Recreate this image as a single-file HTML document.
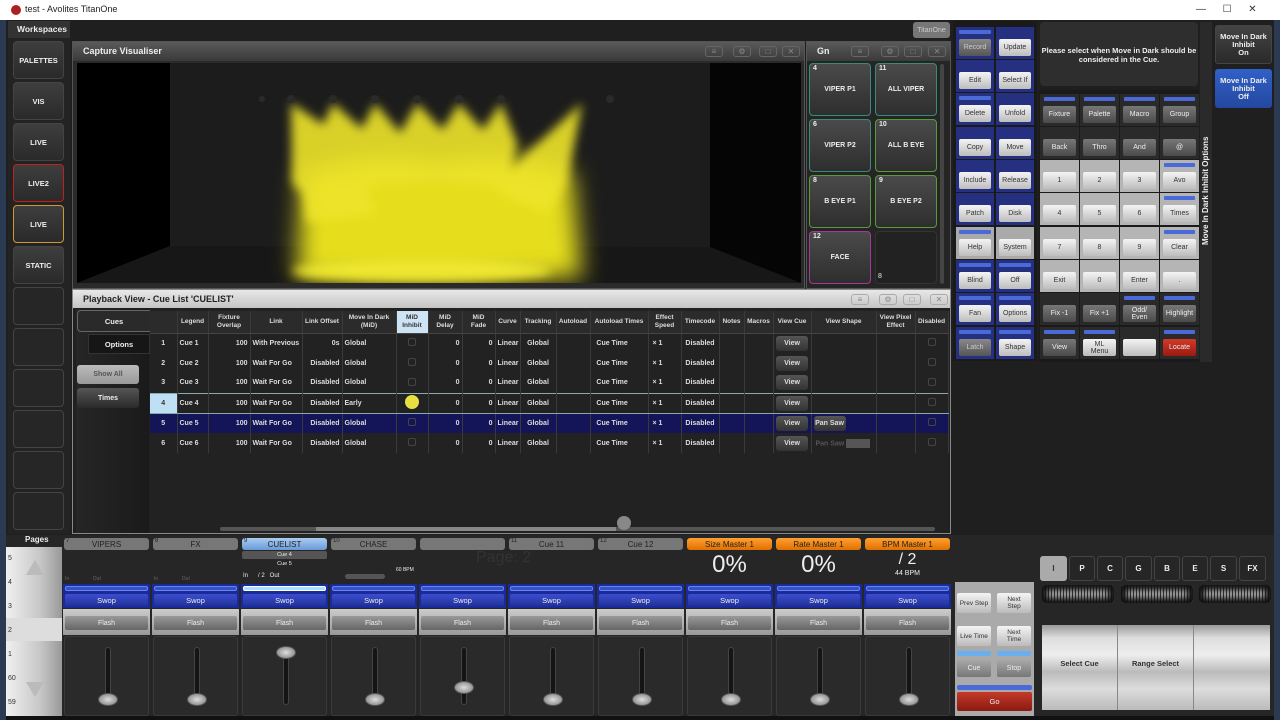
<!DOCTYPE html>
<html style="overflow:hidden"><head><meta charset="utf-8"><style>
*{box-sizing:border-box;margin:0;padding:0}
html,body{width:1280px;height:720px;overflow:hidden}
body{background:#1f1f1f;font-family:"Liberation Sans",sans-serif;color:#eee;position:relative;font-size:8px}
.a{position:absolute}
.c{display:flex;align-items:center;justify-content:center;text-align:center}
.ws{position:absolute;left:13px;width:51px;height:38px;border:1px solid #444;border-radius:4px;background:linear-gradient(#3e3e3e,#2a2a2a);font-weight:bold;font-size:7.5px;color:#eee}
.ws.e{background:#262626}
.win{position:absolute;background:#252525;border:1px solid #555}
.tb{position:absolute;left:0;right:0;top:0;height:19px;background:linear-gradient(#5a5a5a,#3a3a3a);font-weight:bold;font-size:9px;padding:4px 10px}
.ico{position:absolute;top:4px;width:18px;height:11px;border:1px solid #666;border-radius:3px;color:#888;font-size:8px;line-height:9px;text-align:center}
.gb{position:absolute;width:62px;height:53px;border:1px solid;border-radius:4px;background:linear-gradient(#4a4a4a,#2e2e2e);font-size:7px;font-weight:bold}
.gb span{position:absolute;left:3px;top:1px;font-size:7px}
table{border-collapse:collapse;table-layout:fixed;position:absolute;left:150px;top:311px;width:797px}
td,th{border-right:1px solid #3a3a3a;height:20px;font-size:7px;font-weight:bold;color:#ddd;padding:0 2px;white-space:nowrap;overflow:hidden}
th{height:22px;background:#2b2b2b;text-align:center;line-height:8px;border-bottom:1px solid #444;white-space:normal;font-size:6.5px}
td.r{text-align:right}td.m{text-align:center}
tr.s td{background:#141458}
tr.h td{border-top:1px solid #8aa;border-bottom:1px solid #8aa}
.cb{display:inline-block;width:8px;height:8px;border:1px solid #444;border-radius:2px}
.vw{display:inline-block;width:32px;height:15px;line-height:15px;background:linear-gradient(#555,#333);border-radius:3px;text-align:center}
.cmd{position:absolute;width:38px;height:32px;background:#263080}
.cmd.g{background:#aaa}
.cmd .bar{position:absolute;left:3px;right:3px;top:3px;height:4px;background:#4a6ad8;border-radius:1px}
.cmd .bt{position:absolute;left:3px;right:3px;top:12px;height:17px;background:linear-gradient(#f4f4f4,#bdbdbd);color:#333;border-radius:2px;font-size:7px}
.kp{position:absolute;width:39px;height:32px;background:#2a2a2a}
.kp.l{background:#b5b5b5}
.kp .bar{position:absolute;left:4px;right:4px;top:3px;height:4px;background:#4a6ad8;border-radius:1px}
.kp .bt{position:absolute;left:3px;right:3px;top:12px;height:17px;border-radius:2px;font-size:7px;line-height:7px}
.bd{background:linear-gradient(#777,#4a4a4a);color:#eee}
.bl{background:linear-gradient(#f4f4f4,#bdbdbd);color:#333}
.fc{position:absolute;top:537px;width:87px;height:179px}
.tab{position:absolute;top:1px;left:1px;right:1px;height:12px;background:#777;border-radius:3px;color:#222;font-size:8px}
.tab i{position:absolute;left:2px;top:0;font-style:normal;font-size:6px}
.sw{position:absolute;top:47px;left:0;right:0;height:24px;background:#1a2a9a}
.sw .bar{position:absolute;left:2px;right:2px;top:2px;height:5px;background:#3052d0;border:1px solid #6a86e0;border-radius:2px}
.sw .bt{position:absolute;left:2px;right:2px;top:10px;height:12px;background:linear-gradient(#3c4ed0,#22329a);border-radius:2px;font-size:7.5px}
.fl{position:absolute;top:72px;left:0;right:0;height:26px;background:linear-gradient(#ccc,#999)}
.fl .bt{position:absolute;left:2px;right:2px;top:7px;height:14px;background:linear-gradient(#999,#666);border-radius:2px;font-size:7px}
.fd{position:absolute;top:99px;left:1px;right:1px;bottom:0;border:1px solid #3a3a3a;border-radius:3px;background:#2a2a2a}
.trk{position:absolute;left:40px;top:10px;width:6px;height:58px;background:#151515;border-radius:3px;border:1px solid #444}
.knb{position:absolute;left:33px;width:20px;height:13px;border-radius:50%;background:radial-gradient(#ddd,#777);border:1px solid #555}
</style></head><body>
<div class="a" style="left:0;top:0;width:1280px;height:20px;background:#fff;color:#222;font-size:9px;padding:4px 0 0 25px">test - Avolites TitanOne</div>
<div class="a" style="left:11px;top:5px;width:10px;height:10px;border-radius:50%;background:#a22"></div>
<div class="a" style="left:1196px;top:4px;color:#333;font-size:10px">&#8212;&nbsp;&nbsp;&nbsp;&nbsp;&nbsp;&nbsp;&#9744;&nbsp;&nbsp;&nbsp;&nbsp;&nbsp;&nbsp;&#10005;</div>
<div class="a" style="left:0;top:20px;width:6px;height:700px;background:#2a3a52"></div>
<div class="a" style="left:1274px;top:20px;width:6px;height:700px;background:#2a3a52"></div>
<div class="a" style="left:8px;top:21px;width:62px;height:17px;background:#333;font-size:8.5px;font-weight:bold;padding:3px 0 0 9px">Workspaces</div>
<div class="a" style="left:8px;top:38px;width:62px;height:496px;background:#232323"></div>
<div class="ws c" style="top:41px">PALETTES</div>
<div class="ws c" style="top:82px">VIS</div>
<div class="ws c" style="top:123px">LIVE</div>
<div class="ws c" style="top:164px;border-color:#b22">LIVE2</div>
<div class="ws c" style="top:205px;border-color:#c93">LIVE</div>
<div class="ws c" style="top:246px">STATIC</div>
<div class="ws e" style="top:287px"></div><div class="ws e" style="top:328px"></div><div class="ws e" style="top:369px"></div><div class="ws e" style="top:410px"></div><div class="ws e" style="top:451px"></div><div class="ws e" style="top:492px"></div>
<div class="win" style="left:72px;top:41px;width:733px;height:248px;background:#2a2a2a">
<div class="tb">Capture Visualiser</div>
<div class="ico" style="left:632px">&#8801;</div><div class="ico" style="left:660px">&#9881;</div><div class="ico" style="left:686px">&#9633;</div><div class="ico" style="left:709px">&#10005;</div>
</div>
<svg class="a" style="left:77px;top:63px" width="724" height="220">
<defs><filter id="bl" x="-30%" y="-30%" width="160%" height="160%"><feGaussianBlur stdDeviation="5"/></filter><filter id="b2" x="-30%" y="-30%" width="160%" height="160%"><feGaussianBlur stdDeviation="12"/></filter></defs>
<rect width="724" height="220" fill="#1a1a1a"/>
<rect x="93" y="0" width="540" height="184" fill="#1c1c1c"/>
<polygon points="0,0 93,0 93,183 0,220" fill="#000"/>
<polygon points="633,0 724,0 724,220 633,184" fill="#050505"/>
<polygon points="93,183 633,184 724,220 0,220" fill="#171717"/>
<g filter="url(#b2)" fill="#e6de1c">
<path d="M225 110 Q300 85 360 100 Q430 85 495 110 L505 215 L220 215 Z"/>
</g>
<g filter="url(#bl)" fill="#eee42a" opacity="0.9">
<polygon points="214,40 250,70 235,140 215,120"/>
<polygon points="214,40 262,72 300,150 230,160"/>
<polygon points="256,40 292,72 300,125 255,120 240,75"/>
<polygon points="298,40 325,72 335,120 285,120 280,75"/>
<polygon points="340,40 370,72 375,120 320,120 322,72"/>
<polygon points="382,40 410,72 410,120 360,120 360,75"/>
<polygon points="424,40 440,80 430,125 390,120 400,75"/>
<polygon points="505,40 490,120 470,150 420,130 450,90"/>
<ellipse cx="345" cy="208" rx="130" ry="12" fill="#f6ee30"/>
</g>
<g fill="#2a2a2a"><circle cx="185" cy="36" r="3"/><circle cx="214" cy="36" r="4"/><circle cx="256" cy="36" r="4"/><circle cx="298" cy="36" r="4"/><circle cx="340" cy="36" r="4"/><circle cx="382" cy="36" r="4"/><circle cx="424" cy="36" r="4"/><circle cx="533" cy="36" r="4"/></g>
</svg>
<div class="a c" style="left:913px;top:22px;width:37px;height:16px;background:#777;border-radius:3px;color:#ccc;font-size:7px">TitanOne</div>
<div class="win" style="left:806px;top:41px;width:145px;height:248px">
<div class="tb" style="padding-left:10px">Gn</div>
<div class="ico" style="left:44px">&#8801;</div><div class="ico" style="left:74px">&#9881;</div><div class="ico" style="left:97px">&#9633;</div><div class="ico" style="left:121px">&#10005;</div>
</div>
<div class="gb c" style="left:809px;top:63px;border-color:#3a8a7a"><span>4</span>VIPER P1</div>
<div class="gb c" style="left:875px;top:63px;border-color:#3a8a7a"><span>11</span>ALL VIPER</div>
<div class="gb c" style="left:809px;top:119px;border-color:#3a8a7a"><span>6</span>VIPER P2</div>
<div class="gb c" style="left:875px;top:119px;border-color:#5a9a3a"><span>10</span>ALL B EYE</div>
<div class="gb c" style="left:809px;top:175px;border-color:#5a9a3a"><span>8</span>B EYE P1</div>
<div class="gb c" style="left:875px;top:175px;border-color:#5a9a3a"><span>9</span>B EYE P2</div>
<div class="gb c" style="left:809px;top:231px;border-color:#a3399a"><span>12</span>FACE</div>
<div class="a" style="left:875px;top:231px;width:62px;height:53px;border:1px solid #333;border-radius:4px;background:#222;font-size:7px;padding:41px 0 0 2px">8</div>
<div class="a" style="left:940px;top:64px;width:4px;height:220px;background:#444;border-radius:2px"></div>
<div class="win" style="left:72px;top:289px;width:879px;height:245px;background:#202020;border-color:#888">
<div class="tb" style="background:linear-gradient(#e8e8e8,#c4c4c4);color:#222;height:18px;padding-top:4px">Playback View - Cue List 'CUELIST'</div>
<div class="ico" style="left:778px;border-color:#aaa">&#8801;</div><div class="ico" style="left:806px;border-color:#aaa">&#9881;</div><div class="ico" style="left:830px;border-color:#aaa">&#9633;</div><div class="ico" style="left:857px;border-color:#aaa">&#10005;</div>
</div>
<div class="a" style="left:76px;top:309px;width:73px;height:224px;background:linear-gradient(90deg,#262626,#1a1a1a)"></div>
<div class="a c" style="left:77px;top:310px;width:73px;height:22px;border:1px solid #666;border-right:none;border-radius:4px 0 0 4px;background:#2a2a2a;font-weight:bold;font-size:7.5px">Cues</div>
<div class="a c" style="left:88px;top:334px;width:62px;height:20px;background:#161616;border:1px solid #333;font-weight:bold;font-size:7.5px">Options</div>
<div class="a c" style="left:77px;top:365px;width:62px;height:19px;background:linear-gradient(#bbb,#999);border-radius:3px;color:#555;font-size:7px;font-weight:bold">Show All</div>
<div class="a c" style="left:77px;top:388px;width:62px;height:20px;background:linear-gradient(#555,#2a2a2a);border-radius:3px;font-size:7px;font-weight:bold">Times</div>
<div class="a" style="left:150px;top:309px;width:798px;height:224px;background:#222"></div>
<table>
<colgroup><col style="width:27px"><col style="width:31px"><col style="width:42px"><col style="width:52px"><col style="width:40px"><col style="width:54px"><col style="width:32px"><col style="width:34px"><col style="width:33px"><col style="width:25px"><col style="width:36px"><col style="width:34px"><col style="width:58px"><col style="width:33px"><col style="width:38px"><col style="width:25px"><col style="width:29px"><col style="width:38px"><col style="width:65px"><col style="width:39px"><col style="width:33px"></colgroup>
<tr><th></th><th>Legend</th><th>Fixture Overlap</th><th>Link</th><th>Link Offset</th><th>Move In Dark (MiD)</th><th style="background:#cde4f4;color:#333">MiD Inhibit</th><th>MiD Delay</th><th>MiD Fade</th><th>Curve</th><th>Tracking</th><th>Autoload</th><th>Autoload Times</th><th>Effect Speed</th><th>Timecode</th><th>Notes</th><th>Macros</th><th>View Cue</th><th>View Shape</th><th>View Pixel Effect</th><th>Disabled</th></tr>
<tr><td class="m">1</td><td>Cue 1</td><td class="r">100</td><td>With Previous</td><td class="r">0s</td><td>Global</td><td class="m"><span class="cb"></span></td><td class="r">0</td><td class="r">0</td><td>Linear</td><td class="m">Global</td><td></td><td>&nbsp;&nbsp;Cue Time</td><td>&nbsp;× 1</td><td class="m">Disabled</td><td></td><td></td><td class="m"><span class="vw">View</span></td><td></td><td></td><td class="m"><span class="cb"></span></td></tr>
<tr><td class="m">2</td><td>Cue 2</td><td class="r">100</td><td>Wait For Go</td><td class="r">Disabled</td><td>Global</td><td class="m"><span class="cb"></span></td><td class="r">0</td><td class="r">0</td><td>Linear</td><td class="m">Global</td><td></td><td>&nbsp;&nbsp;Cue Time</td><td>&nbsp;× 1</td><td class="m">Disabled</td><td></td><td></td><td class="m"><span class="vw">View</span></td><td></td><td></td><td class="m"><span class="cb"></span></td></tr>
<tr><td class="m">3</td><td>Cue 3</td><td class="r">100</td><td>Wait For Go</td><td class="r">Disabled</td><td>Global</td><td class="m"><span class="cb"></span></td><td class="r">0</td><td class="r">0</td><td>Linear</td><td class="m">Global</td><td></td><td>&nbsp;&nbsp;Cue Time</td><td>&nbsp;× 1</td><td class="m">Disabled</td><td></td><td></td><td class="m"><span class="vw">View</span></td><td></td><td></td><td class="m"><span class="cb"></span></td></tr>
<tr class="h"><td class="m" style="background:#bfe0f4;color:#333">4</td><td>Cue 4</td><td class="r">100</td><td>Wait For Go</td><td class="r">Disabled</td><td>Early</td><td class="m"><span class="cb" style="background:#e8e040;border-radius:50%;width:14px;height:14px;border:none"></span></td><td class="r">0</td><td class="r">0</td><td>Linear</td><td class="m">Global</td><td></td><td>&nbsp;&nbsp;Cue Time</td><td>&nbsp;× 1</td><td class="m">Disabled</td><td></td><td></td><td class="m"><span class="vw">View</span></td><td></td><td></td><td class="m"><span class="cb"></span></td></tr>
<tr class="s"><td class="m">5</td><td>Cue 5</td><td class="r">100</td><td>Wait For Go</td><td class="r">Disabled</td><td>Global</td><td class="m"><span class="cb"></span></td><td class="r">0</td><td class="r">0</td><td>Linear</td><td class="m">Global</td><td></td><td>&nbsp;&nbsp;Cue Time</td><td>&nbsp;× 1</td><td class="m">Disabled</td><td></td><td></td><td class="m"><span class="vw">View</span></td><td><span class="vw">Pan Saw</span></td><td></td><td class="m"><span class="cb"></span></td></tr>
<tr><td class="m">6</td><td>Cue 6</td><td class="r">100</td><td>Wait For Go</td><td class="r">Disabled</td><td>Global</td><td class="m"><span class="cb"></span></td><td class="r">0</td><td class="r">0</td><td>Linear</td><td class="m">Global</td><td></td><td>&nbsp;&nbsp;Cue Time</td><td>&nbsp;× 1</td><td class="m">Disabled</td><td></td><td></td><td class="m"><span class="vw">View</span></td><td style="color:#555">&nbsp;Pan Saw <span style="display:inline-block;width:24px;height:9px;background:#555;vertical-align:middle"></span></td><td></td><td class="m"><span class="cb"></span></td></tr>
</table>
<div class="a" style="left:220px;top:527px;width:715px;height:4px;background:#555;border-radius:2px"></div>
<div class="a" style="left:316px;top:527px;width:300px;height:4px;background:#888"></div>
<div class="a" style="left:617px;top:516px;width:14px;height:14px;border-radius:50%;background:#888"></div>
<div class="a" style="left:953px;top:21px;width:84px;height:340px;background:#1a1a1a"></div>
<div class="cmd" style="left:956px;top:27px"><div class="bar"></div><div class="bt c" style="background:linear-gradient(#888,#555);color:#ccc">Record</div></div>
<div class="cmd" style="left:996px;top:27px"><div class="bt c">Update</div></div>
<div class="cmd" style="left:956px;top:60px"><div class="bt c">Edit</div></div>
<div class="cmd" style="left:996px;top:60px"><div class="bt c">Select If</div></div>
<div class="cmd" style="left:956px;top:93px"><div class="bar"></div><div class="bt c">Delete</div></div>
<div class="cmd" style="left:996px;top:93px"><div class="bt c">Unfold</div></div>
<div class="cmd" style="left:956px;top:127px"><div class="bt c">Copy</div></div>
<div class="cmd" style="left:996px;top:127px"><div class="bt c">Move</div></div>
<div class="cmd" style="left:956px;top:160px"><div class="bt c">Include</div></div>
<div class="cmd" style="left:996px;top:160px"><div class="bt c">Release</div></div>
<div class="cmd" style="left:956px;top:193px"><div class="bt c">Patch</div></div>
<div class="cmd" style="left:996px;top:193px"><div class="bt c">Disk</div></div>
<div class="cmd g" style="left:956px;top:227px"><div class="bar"></div><div class="bt c">Help</div></div>
<div class="cmd g" style="left:996px;top:227px"><div class="bt c">System</div></div>
<div class="cmd" style="left:956px;top:260px"><div class="bar"></div><div class="bt c">Blind</div></div>
<div class="cmd" style="left:996px;top:260px"><div class="bar"></div><div class="bt c">Off</div></div>
<div class="cmd" style="left:956px;top:293px"><div class="bar"></div><div class="bt c">Fan</div></div>
<div class="cmd" style="left:996px;top:293px"><div class="bar"></div><div class="bt c">Options</div></div>
<div class="cmd" style="left:956px;top:327px"><div class="bar"></div><div class="bt c" style="background:linear-gradient(#888,#555);color:#ccc">Latch</div></div>
<div class="cmd" style="left:996px;top:327px"><div class="bar"></div><div class="bt c">Shape</div></div>
<div class="a c" style="left:1040px;top:22px;width:158px;height:64px;background:#2e2e2e;border-radius:4px;font-size:7.5px;font-weight:bold;align-items:flex-start;padding-top:24px;line-height:9px">Please select when Move in Dark should be considered in the Cue.</div>
<div class="a" style="left:1039px;top:90px;width:160px;height:272px;background:#1a1a1a"></div>
<div class="kp" style="left:1040px;top:94px"><div class="bar"></div><div class="bt c bd">Fixture</div></div>
<div class="kp" style="left:1080px;top:94px"><div class="bar"></div><div class="bt c bd">Palette</div></div>
<div class="kp" style="left:1120px;top:94px"><div class="bar"></div><div class="bt c bd">Macro</div></div>
<div class="kp" style="left:1160px;top:94px"><div class="bar"></div><div class="bt c bd">Group</div></div>
<div class="kp" style="left:1040px;top:127px"><div class="bt c bd">Back</div></div>
<div class="kp" style="left:1080px;top:127px"><div class="bt c bd">Thro</div></div>
<div class="kp" style="left:1120px;top:127px"><div class="bt c bd">And</div></div>
<div class="kp" style="left:1160px;top:127px"><div class="bt c bd">@</div></div>
<div class="kp l" style="left:1040px;top:160px"><div class="bt c bl">1</div></div>
<div class="kp l" style="left:1080px;top:160px"><div class="bt c bl">2</div></div>
<div class="kp l" style="left:1120px;top:160px"><div class="bt c bl">3</div></div>
<div class="kp l" style="left:1160px;top:160px"><div class="bar"></div><div class="bt c bl">Avo</div></div>
<div class="kp l" style="left:1040px;top:193px"><div class="bt c bl">4</div></div>
<div class="kp l" style="left:1080px;top:193px"><div class="bt c bl">5</div></div>
<div class="kp l" style="left:1120px;top:193px"><div class="bt c bl">6</div></div>
<div class="kp l" style="left:1160px;top:193px"><div class="bar"></div><div class="bt c bl">Times</div></div>
<div class="kp l" style="left:1040px;top:227px"><div class="bt c bl">7</div></div>
<div class="kp l" style="left:1080px;top:227px"><div class="bt c bl">8</div></div>
<div class="kp l" style="left:1120px;top:227px"><div class="bt c bl">9</div></div>
<div class="kp l" style="left:1160px;top:227px"><div class="bar"></div><div class="bt c bl">Clear</div></div>
<div class="kp l" style="left:1040px;top:260px"><div class="bt c bl">Exit</div></div>
<div class="kp l" style="left:1080px;top:260px"><div class="bt c bl">0</div></div>
<div class="kp l" style="left:1120px;top:260px"><div class="bt c bl">Enter</div></div>
<div class="kp l" style="left:1160px;top:260px"><div class="bt c bl">.</div></div>
<div class="kp" style="left:1040px;top:293px"><div class="bt c bd">Fix -1</div></div>
<div class="kp" style="left:1080px;top:293px"><div class="bt c bd">Fix +1</div></div>
<div class="kp" style="left:1120px;top:293px"><div class="bar"></div><div class="bt c bd">Odd/<br>Even</div></div>
<div class="kp" style="left:1160px;top:293px"><div class="bar"></div><div class="bt c bd">Highlight</div></div>
<div class="kp" style="left:1040px;top:327px"><div class="bar"></div><div class="bt c bd">View</div></div>
<div class="kp" style="left:1080px;top:327px"><div class="bar"></div><div class="bt c bl">ML<br>Menu</div></div>
<div class="kp" style="left:1120px;top:327px"><div class="bt c bl"></div></div>
<div class="kp" style="left:1160px;top:327px"><div class="bar"></div><div class="bt c" style="background:linear-gradient(#d23a2a,#9a1a10)">Locate</div></div>
<div class="a" style="left:1200px;top:22px;width:12px;height:340px;background:#2a2a2a"></div>
<div class="a" style="left:1201px;top:245px;transform:rotate(-90deg);transform-origin:0 0;font-size:8px;font-weight:bold;white-space:nowrap">Move In Dark Inhibit Options</div>
<div class="a" style="left:1212px;top:22px;width:62px;height:340px;background:#1f1f1f"></div>
<div class="a c" style="left:1215px;top:25px;width:57px;height:39px;background:linear-gradient(#444,#2a2a2a);border:1px solid #444;border-radius:3px;font-size:7.5px;font-weight:bold;line-height:8px">Move In Dark<br>Inhibit<br>On</div>
<div class="a c" style="left:1215px;top:69px;width:57px;height:39px;background:linear-gradient(#3060c8,#2448a0);border-radius:3px;font-size:7.5px;font-weight:bold;line-height:8px">Move In Dark<br>Inhibit<br>Off</div>
<div class="a" style="left:6px;top:535px;width:1268px;height:185px;background:#262626"></div>
<div class="a" style="left:5px;top:534px;width:55px;height:14px;font-size:8px;font-weight:bold;padding:1px 0 0 20px">Pages</div>
<div class="a" style="left:6px;top:547px;width:56px;height:170px;background:linear-gradient(90deg,#f0f0f0,#c8c8c8 60%,#999)"></div>
<div class="a" style="left:6px;top:618px;width:56px;height:23px;background:#ddd"></div>
<div class="a" style="left:8px;top:547px;height:170px;overflow:hidden;font-size:7px;color:#333;line-height:24px">5<br>4<br>3<br>2<br>1<br>60<br>59</div>
<div class="a" style="left:26px;top:560px;width:0;height:0;border-left:9px solid transparent;border-right:9px solid transparent;border-bottom:15px solid #bbb"></div>
<div class="a" style="left:26px;top:682px;width:0;height:0;border-left:9px solid transparent;border-right:9px solid transparent;border-top:15px solid #bbb"></div>
<div class="a" style="left:476px;top:549px;font-size:16px;color:#333">Page: 2</div>

<div class="fc" style="left:63px"><div class="tab c"><i>7</i>VIPERS</div><div class="a" style="top:39px;left:2px;font-size:5px;color:#666">In&nbsp;&nbsp;&nbsp;&nbsp;&nbsp;&nbsp;&nbsp;&nbsp;&nbsp;&nbsp;&nbsp;&nbsp;&nbsp;&nbsp;&nbsp;&nbsp;&nbsp;Out</div><div class="sw"><div class="bar"></div><div class="bt c">Swop</div></div><div class="fl"><div class="bt c">Flash</div></div><div class="fd"><div class="trk"></div><div class="knb" style="top:56px"></div></div></div>
<div class="fc" style="left:152px"><div class="tab c"><i>8</i>FX</div><div class="a" style="top:39px;left:2px;font-size:5px;color:#666">In&nbsp;&nbsp;&nbsp;&nbsp;&nbsp;&nbsp;&nbsp;&nbsp;&nbsp;&nbsp;&nbsp;&nbsp;&nbsp;&nbsp;&nbsp;&nbsp;&nbsp;Out</div><div class="sw"><div class="bar"></div><div class="bt c">Swop</div></div><div class="fl"><div class="bt c">Flash</div></div><div class="fd"><div class="trk"></div><div class="knb" style="top:56px"></div></div></div>
<div class="fc" style="left:241px"><div class="tab c" style="background:linear-gradient(#aaccf0,#6a9ad8)"><i>9</i>CUELIST</div>
<div class="a c" style="top:14px;left:1px;right:1px;height:8px;background:#555;font-size:5.5px;border-radius:2px">Cue 4</div><div class="a c" style="top:23px;left:1px;right:1px;height:8px;font-size:5.5px">Cue 5</div><div class="a" style="top:36px;left:2px;font-size:6px">In&nbsp;&nbsp;&nbsp;&nbsp;&nbsp;&nbsp;/ 2&nbsp;&nbsp;&nbsp;Out</div>
<div class="sw"><div class="bar" style="background:#a8e0ff;border-color:#fff"></div><div class="bt c">Swop</div></div><div class="fl"><div class="bt c">Flash</div></div><div class="fd"><div class="trk"></div><div class="knb" style="top:9px"></div></div></div>
<div class="fc" style="left:330px"><div class="tab c"><i>10</i>CHASE</div><div class="a" style="top:30px;left:66px;font-size:5px">60 BPM</div><div class="a" style="top:37px;left:15px;width:40px;height:5px;background:#555;border-radius:3px"></div><div class="sw"><div class="bar"></div><div class="bt c">Swop</div></div><div class="fl"><div class="bt c">Flash</div></div><div class="fd"><div class="trk"></div><div class="knb" style="top:56px"></div></div></div>
<div class="fc" style="left:419px"><div class="tab c"></div><div class="sw"><div class="bar"></div><div class="bt c">Swop</div></div><div class="fl"><div class="bt c">Flash</div></div><div class="fd"><div class="trk"></div><div class="knb" style="top:44px"></div></div></div>
<div class="fc" style="left:508px"><div class="tab c"><i>11</i>Cue 11</div><div class="sw"><div class="bar"></div><div class="bt c">Swop</div></div><div class="fl"><div class="bt c">Flash</div></div><div class="fd"><div class="trk"></div><div class="knb" style="top:56px"></div></div></div>
<div class="fc" style="left:597px"><div class="tab c"><i>12</i>Cue 12</div><div class="sw"><div class="bar"></div><div class="bt c">Swop</div></div><div class="fl"><div class="bt c">Flash</div></div><div class="fd"><div class="trk"></div><div class="knb" style="top:56px"></div></div></div>
<div class="fc" style="left:686px"><div class="tab c" style="background:linear-gradient(#ffa030,#e07000)">Size Master 1</div><div class="a c" style="top:14px;left:0;right:0;font-size:24px">0%</div><div class="sw"><div class="bar"></div><div class="bt c">Swop</div></div><div class="fl"><div class="bt c">Flash</div></div><div class="fd"><div class="trk"></div><div class="knb" style="top:56px"></div></div></div>
<div class="fc" style="left:775px"><div class="tab c" style="background:linear-gradient(#ffa030,#e07000)">Rate Master 1</div><div class="a c" style="top:14px;left:0;right:0;font-size:24px">0%</div><div class="sw"><div class="bar"></div><div class="bt c">Swop</div></div><div class="fl"><div class="bt c">Flash</div></div><div class="fd"><div class="trk"></div><div class="knb" style="top:56px"></div></div></div>
<div class="fc" style="left:864px"><div class="tab c" style="background:linear-gradient(#ffa030,#e07000)">BPM Master 1</div><div class="a c" style="top:14px;left:0;right:0;font-size:16px">/ 2</div><div class="a c" style="top:33px;left:0;right:0;font-size:7px">44 BPM</div><div class="sw"><div class="bar"></div><div class="bt c">Swop</div></div><div class="fl"><div class="bt c">Flash</div></div><div class="fd"><div class="trk"></div><div class="knb" style="top:56px"></div></div></div>

<div class="a" style="left:955px;top:582px;width:79px;height:134px;background:#aaa"></div>
<div class="a c" style="left:957px;top:593px;width:34px;height:20px;background:linear-gradient(#f4f4f4,#bbb);color:#333;font-size:6.5px;border-radius:2px">Prev Step</div>
<div class="a c" style="left:997px;top:593px;width:34px;height:20px;background:linear-gradient(#f4f4f4,#bbb);color:#333;font-size:6.5px;border-radius:2px;line-height:7px">Next<br>Step</div>
<div class="a c" style="left:957px;top:626px;width:34px;height:20px;background:linear-gradient(#f4f4f4,#bbb);color:#333;font-size:6.5px;border-radius:2px">Live Time</div>
<div class="a c" style="left:997px;top:626px;width:34px;height:20px;background:linear-gradient(#f4f4f4,#bbb);color:#333;font-size:6.5px;border-radius:2px;line-height:7px">Next<br>Time</div>
<div class="a" style="left:957px;top:651px;width:34px;height:5px;background:#6ab0f0;border-radius:2px"></div>
<div class="a" style="left:997px;top:651px;width:34px;height:5px;background:#6ab0f0;border-radius:2px"></div>
<div class="a c" style="left:957px;top:659px;width:34px;height:18px;background:linear-gradient(#aaa,#777);font-size:7px;border-radius:2px">Cue</div>
<div class="a c" style="left:997px;top:659px;width:34px;height:18px;background:linear-gradient(#aaa,#777);font-size:7px;border-radius:2px">Stop</div>
<div class="a" style="left:957px;top:685px;width:75px;height:5px;background:#4a6ad8;border-radius:2px"></div>
<div class="a c" style="left:957px;top:692px;width:75px;height:19px;background:linear-gradient(#c43a2a,#8a1a10);font-size:7.5px;border-radius:2px">Go</div>
<div class="a c" style="left:1040px;top:556px;width:27px;height:25px;background:#aaa;color:#333;border-radius:3px;font-weight:bold">I</div>
<div class="a c" style="left:1069px;top:556px;width:26px;height:25px;border:1px solid #444;border-radius:3px;font-weight:bold">P</div>
<div class="a c" style="left:1097px;top:556px;width:26px;height:25px;border:1px solid #444;border-radius:3px;font-weight:bold">C</div>
<div class="a c" style="left:1125px;top:556px;width:27px;height:25px;border:1px solid #444;border-radius:3px;font-weight:bold">G</div>
<div class="a c" style="left:1154px;top:556px;width:26px;height:25px;border:1px solid #444;border-radius:3px;font-weight:bold">B</div>
<div class="a c" style="left:1182px;top:556px;width:26px;height:25px;border:1px solid #444;border-radius:3px;font-weight:bold">E</div>
<div class="a c" style="left:1210px;top:556px;width:27px;height:25px;border:1px solid #444;border-radius:3px;font-weight:bold">S</div>
<div class="a c" style="left:1239px;top:556px;width:27px;height:25px;border:1px solid #444;border-radius:3px;font-weight:bold">FX</div>
<div class="a" style="left:1042px;top:585px;width:72px;height:18px;border-radius:4px;background:repeating-linear-gradient(90deg,#333 0 1px,#aaa 1px 3px);box-shadow:inset 0 0 6px 5px #111"></div>
<div class="a" style="left:1121px;top:585px;width:72px;height:18px;border-radius:4px;background:repeating-linear-gradient(90deg,#333 0 1px,#aaa 1px 3px);box-shadow:inset 0 0 6px 5px #111"></div>
<div class="a" style="left:1199px;top:585px;width:72px;height:18px;border-radius:4px;background:repeating-linear-gradient(90deg,#333 0 1px,#aaa 1px 3px);box-shadow:inset 0 0 6px 5px #111"></div>
<div class="a" style="left:1042px;top:625px;width:228px;height:85px;background:linear-gradient(#999,#ddd 15%,#eee 35%,#bbb 55%,#ddd 75%,#bbb)"></div>
<div class="a" style="left:1117px;top:625px;width:1px;height:85px;background:#888"></div>
<div class="a" style="left:1193px;top:625px;width:1px;height:85px;background:#888"></div>
<div class="a c" style="left:1042px;top:657px;width:75px;height:12px;color:#333;font-weight:bold;font-size:7.5px">Select Cue</div>
<div class="a c" style="left:1118px;top:657px;width:75px;height:12px;color:#333;font-weight:bold;font-size:7.5px">Range Select</div>
<div class="a" style="left:6px;top:716px;width:1268px;height:4px;background:#111"></div>
</body></html>
